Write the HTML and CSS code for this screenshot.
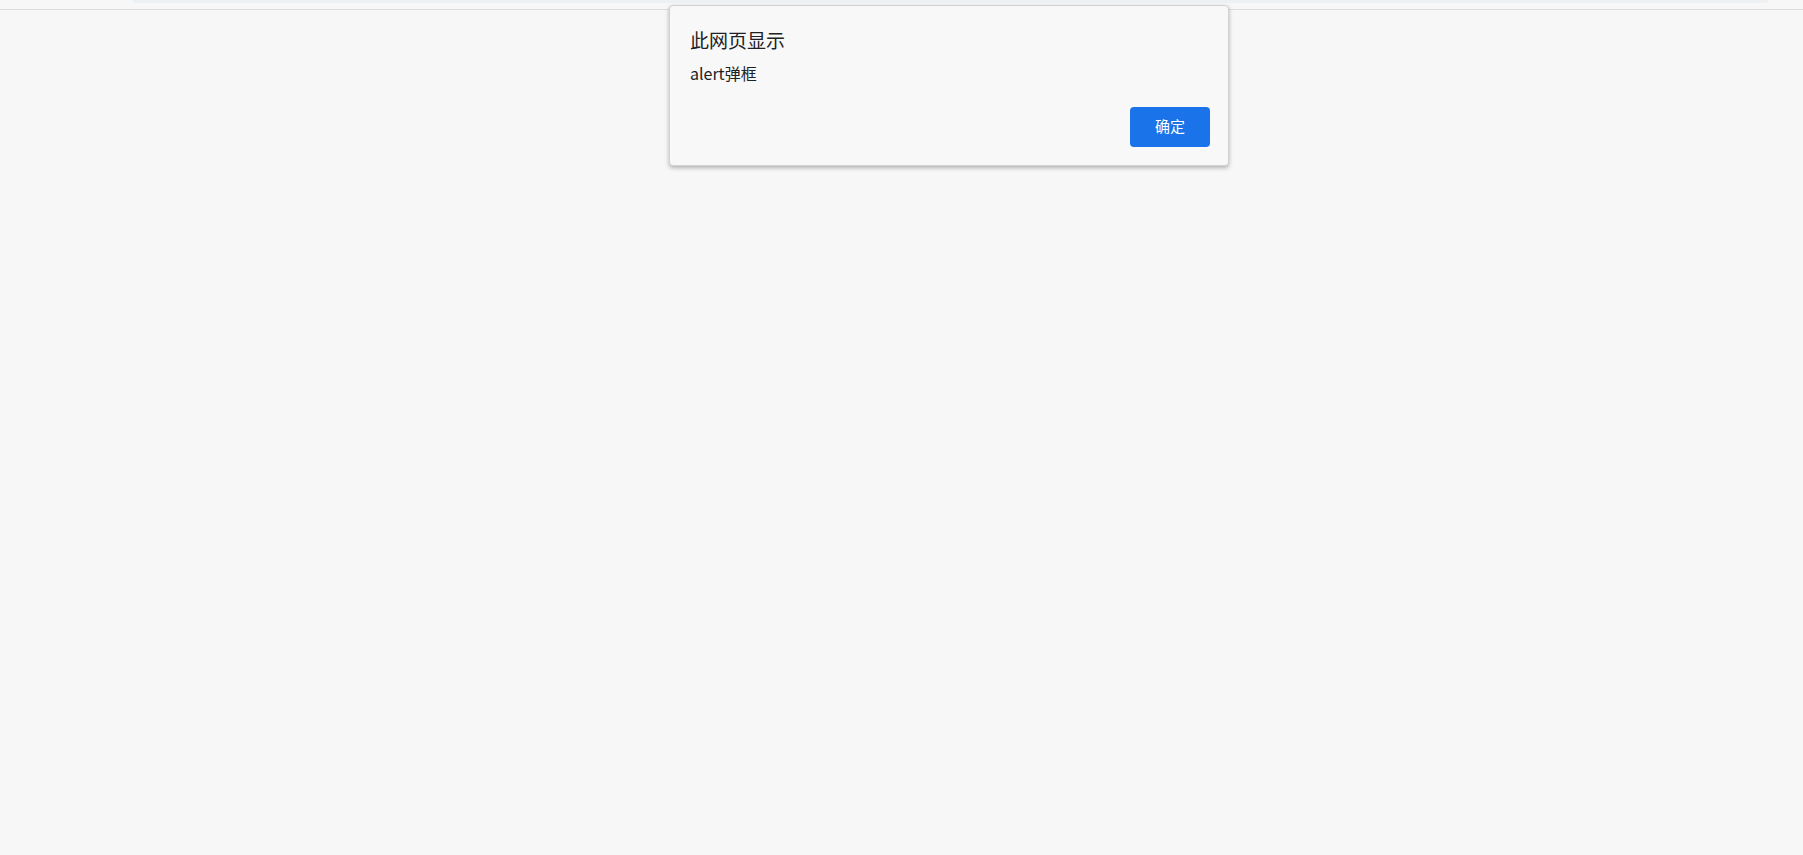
FILE: index.html
```html
<!DOCTYPE html>
<html lang="zh-CN">
<head>
<meta charset="utf-8">
<title>alert</title>
<link rel="stylesheet" href="styles.css">
</head>
<body>
<div class="topbar"><div class="strip"></div></div>
<div class="dialog" role="alertdialog">
  <div class="title">此网页显示</div>
  <div class="message">alert弹框</div>
  <div class="actions"><button class="ok">确定</button></div>
</div>
</body>
</html>
```
FILE: styles.css
```css
html, body {
  margin: 0;
  padding: 0;
  background: #f7f7f7;
  height: 100%;
}
body {
  font-family: "Noto Sans CJK SC", "Noto Sans", sans-serif;
  color: #202124;
}
.topbar {
  height: 9px;
  border-bottom: 1px solid #dcdcdc;
  position: relative;
}
.strip {
  margin-left: 133px;
  margin-right: 35px;
  height: 3px;
  background: #edf1f4;
  border-radius: 0 0 3px 3px;
}
.dialog {
  position: absolute;
  left: 669px;
  top: 5px;
  width: 558px;
  height: 159px;
  box-sizing: content-box;
  background: #f8f8f8;
  border: 1px solid #d2d2d2;
  border-radius: 4px;
  box-shadow: 0 2px 4px rgba(0, 0, 0, 0.28);
  display: flex;
  flex-direction: column;
  padding: 0;
}
.title {
  font-size: 19px;
  line-height: 26px;
  margin: 21px 0 0 20px;
}
.message {
  font-size: 16px;
  line-height: 22px;
  margin: 9px 0 0 20px;
}
.actions {
  margin-top: auto;
  display: flex;
  justify-content: flex-end;
  padding: 0 18px 18px 0;
}
.ok {
  width: 80px;
  height: 40px;
  border: none;
  border-radius: 4px;
  background: #1a73e8;
  color: #ffffff;
  font-family: "Noto Sans CJK SC", "Noto Sans", sans-serif;
  font-size: 15px;
  line-height: 20px;
  padding: 0 0 3px 0;
  cursor: pointer;
}
```
